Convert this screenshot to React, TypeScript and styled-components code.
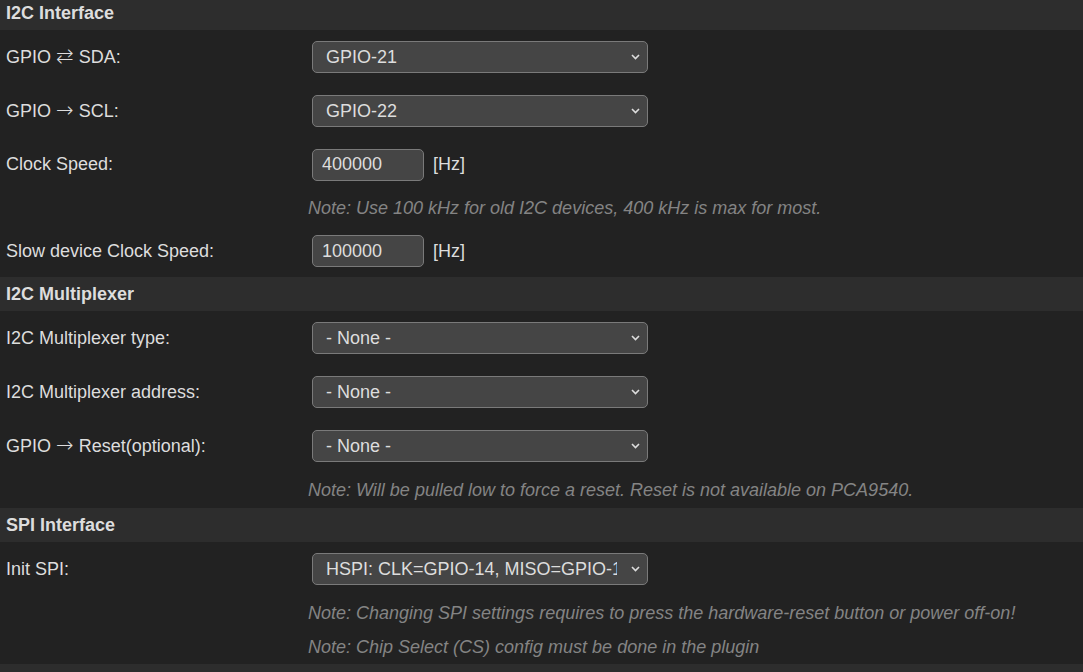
import styled, { createGlobalStyle } from "styled-components";

const GlobalStyle = createGlobalStyle`
    html, body {
        margin: 0;
        padding: 0;
        background: #222222;
        overflow: hidden;
    }
    body {
        font-family: "Liberation Sans", Arial, sans-serif;
        font-size: 18px;
        color: #dddddd;
    }
`;

const Page = styled.div`
    margin-top: -4px;
    width: 100%;
`;

const SectionHeader = styled.div`
    height: 34px;
    display: flex;
    align-items: center;
    padding-left: 6px;
    background: #2d2d2d;
    font-weight: bold;
    color: #dddddd;
`;

const Row = styled.div<{ $height: number }>`
    display: grid;
    grid-template-columns: 302px 1fr;
    align-items: center;
    height: ${(p) => p.$height}px;
`;

const Label = styled.div`
    padding-left: 6px;
    color: #dddddd;
`;

const Arrow = styled.span`
    font-family: "DejaVu Sans", sans-serif;
    font-weight: 200;
    font-size: 21px;
    line-height: 1;
`;

const Value = styled.div`
    display: flex;
    align-items: center;
    padding-left: 6px;
`;

const SelectWrap = styled.div`
    position: relative;
    margin-left: 4px;
    width: 336px;
    height: 32px;
`;

const StyledSelect = styled.select`
    appearance: none;
    width: 100%;
    height: 100%;
    box-sizing: border-box;
    background: #454545;
    border: 1px solid #7a7a7a;
    border-radius: 5px;
    color: #dddddd;
    font-family: "Liberation Sans", Arial, sans-serif;
    font-size: 18px;
    padding: 0 30px 0 13px;
    outline: none;
`;

const Chevron = styled.svg`
    position: absolute;
    right: 8px;
    top: 13px;
    pointer-events: none;
`;

const NumberInput = styled.input`
    margin-left: 4px;
    width: 112px;
    height: 32px;
    box-sizing: border-box;
    background: #454545;
    border: 1px solid #7a7a7a;
    border-radius: 5px;
    color: #dddddd;
    font-family: "Liberation Sans", Arial, sans-serif;
    font-size: 18px;
    padding: 0 9px;
    outline: none;
`;

const Unit = styled.span`
    margin-left: 9px;
    color: #dddddd;
`;

const Note = styled.div`
    font-style: italic;
    color: #848484;
    white-space: nowrap;
`;

function Select({ value }: { value: string }) {
    return (
        <SelectWrap>
            <StyledSelect defaultValue={value}>
                <option>{value}</option>
            </StyledSelect>
            <Chevron width="9" height="6" viewBox="0 0 9 6">
                <path d="M1 1 L4.5 4.5 L8 1" fill="none" stroke="#dddddd" strokeWidth="1.6" />
            </Chevron>
        </SelectWrap>
    );
}

function SelectRow({ label, value }: { label: React.ReactNode; value: string }) {
    return (
        <Row $height={54}>
            <Label>{label}</Label>
            <Value>
                <Select value={value} />
            </Value>
        </Row>
    );
}

function HzRow({ label, value, height }: { label: string; value: string; height: number }) {
    return (
        <Row $height={height}>
            <Label>{label}</Label>
            <Value>
                <NumberInput type="text" defaultValue={value} />
                <Unit>[Hz]</Unit>
            </Value>
        </Row>
    );
}

function NoteRow({ text, height = 34 }: { text: string; height?: number }) {
    return (
        <Row $height={height}>
            <div />
            <Value>
                <Note>{text}</Note>
            </Value>
        </Row>
    );
}

export default function App() {
    return (
        <>
            <GlobalStyle />
            <Page>
                <SectionHeader>I2C Interface</SectionHeader>
                <SelectRow label={<>GPIO <Arrow>⇄</Arrow> SDA:</>} value="GPIO-21" />
                <SelectRow label={<>GPIO <Arrow>→</Arrow> SCL:</>} value="GPIO-22" />
                <HzRow label="Clock Speed:" value="400000" height={53} />
                <NoteRow text="Note: Use 100 kHz for old I2C devices, 400 kHz is max for most." />
                <HzRow label="Slow device Clock Speed:" value="100000" height={52} />

                <SectionHeader>I2C Multiplexer</SectionHeader>
                <SelectRow label="I2C Multiplexer type:" value="- None -" />
                <SelectRow label="I2C Multiplexer address:" value="- None -" />
                <SelectRow label={<>GPIO <Arrow>→</Arrow> Reset(optional):</>} value="- None -" />
                <NoteRow text="Note: Will be pulled low to force a reset. Reset is not available on PCA9540." height={35} />

                <SectionHeader>SPI Interface</SectionHeader>
                <SelectRow label="Init SPI:" value="HSPI: CLK=GPIO-14, MISO=GPIO-12, MOSI=GPIO-13" />
                <NoteRow text="Note: Changing SPI settings requires to press the hardware-reset button or power off-on!" />
                <NoteRow text="Note: Chip Select (CS) config must be done in the plugin" />
                <SectionHeader />
            </Page>
        </>
    );
}
